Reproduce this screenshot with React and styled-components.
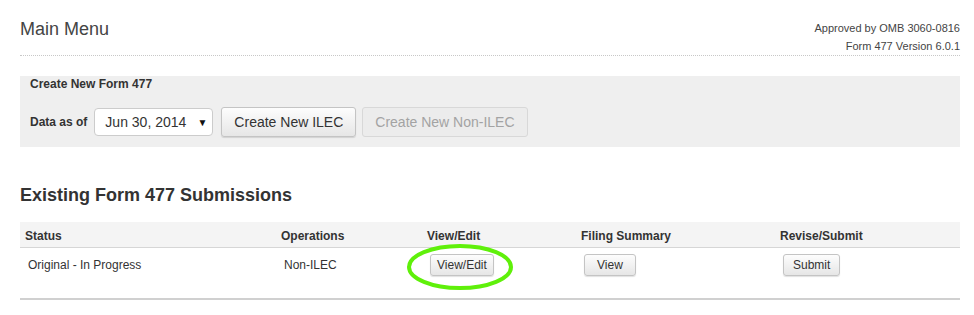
import React from "react";
import styled, { createGlobalStyle } from "styled-components";

const Global = createGlobalStyle`
  html, body { margin: 0; padding: 0; background: #fff; }
  body { font-family: "Liberation Sans", Arial, sans-serif; color: #333; }
`;

const Page = styled.div`
  width: 940px;
  padding-left: 20px;
`;

const Header = styled.header`
  box-sizing: border-box;
  height: 56px;
  padding-top: 17px;
  display: flex;
  justify-content: space-between;
  align-items: flex-start;
  border-bottom: 1px dotted #c8c8c8;
`;

const Title = styled.h1`
  margin: 0;
  font-size: 18px;
  line-height: 24px;
  font-weight: normal;
  color: #444;
`;

const Meta = styled.div`
  margin-top: 2px;
  font-size: 11px;
  line-height: 18px;
  text-align: right;
  color: #444;
`;

const Panel = styled.section`
  margin-top: 20px;
  height: 71px;
  box-sizing: border-box;
  padding: 1px 10px 0;
  background: #efefef;
`;

const PanelTitle = styled.div`
  font-size: 12px;
  line-height: 14px;
  font-weight: bold;
`;

const FormRow = styled.div`
  margin-top: 16px;
  display: flex;
  align-items: center;
`;

const Label = styled.span`
  font-size: 12px;
  font-weight: bold;
  margin-right: 7px;
`;

const Select = styled.div`
  box-sizing: border-box;
  width: 119px;
  height: 28px;
  padding: 0 5px 0 10px;
  display: flex;
  align-items: center;
  justify-content: space-between;
  background: #fff;
  border: 1px solid #ccc;
  border-radius: 4px;
  font-size: 14px;
  color: #333;
  margin-right: 8px;
`;

const Arrow = styled.span`
  font-size: 10px;
  color: #111;
`;

const Button = styled.button`
  box-sizing: border-box;
  font-family: inherit;
  height: ${p => (p.$small ? "22px" : "30px")};
  padding: ${p => p.$pad || (p.$small ? "0 7px" : "0 12px")};
  font-size: ${p => (p.$small ? "12px" : "14px")};
  color: ${p => (p.disabled ? "#a3a3a3" : "#333")};
  background: ${p =>
    p.disabled ? "#ececec" : "linear-gradient(#fdfdfd, #e6e6e6)"};
  border: 1px solid ${p => (p.disabled ? "#d8d8d8" : "#c4c4c4")};
  border-radius: 3px;
  box-shadow: ${p => (p.disabled ? "none" : "0 1px 1px rgba(0,0,0,0.12)")};
  margin-right: ${p => p.$gap || "0"};
  cursor: pointer;
`;

const Heading = styled.h2`
  margin: 37px 0 0;
  font-size: 18px;
  line-height: 22px;
  font-weight: bold;
  color: #333;
`;

const Table = styled.div`
  margin-top: 16px;
  position: relative;
  border-bottom: 2px solid #d0d0d0;
`;

const Row = styled.div`
  display: grid;
  grid-template-columns: 256px 146px 154px 199px 1fr;
  align-items: center;
  height: ${p => (p.$head ? "25px" : "50px")};
  background: ${p => (p.$head ? "#f4f4f4" : "#fff")};
  border-bottom: ${p => (p.$head ? "1px solid #d6d6d6" : "none")};
  font-size: 12px;
  font-weight: ${p => (p.$head ? "bold" : "normal")};
`;

const Cell = styled.div`
  padding-left: ${p => (p.$head ? "5px" : "8px")};
  padding-top: ${p => (p.$head ? "2px" : "0")};
  padding-bottom: ${p => (p.$head ? "0" : "16px")};
`;

const Highlight = styled.svg`
  position: absolute;
  left: 386px;
  top: 21px;
  overflow: visible;
  pointer-events: none;
`;

export default function App() {
  return (
    <>
      <Global />
      <Page>
        <Header>
          <Title>Main Menu</Title>
          <Meta>
            <div>Approved by OMB 3060-0816</div>
            <div>Form 477 Version 6.0.1</div>
          </Meta>
        </Header>
        <Panel>
          <PanelTitle>Create New Form 477</PanelTitle>
          <FormRow>
            <Label>Data as of</Label>
            <Select>
              <span>Jun 30, 2014</span>
              <Arrow>▼</Arrow>
            </Select>
            <Button $gap="6px">Create New ILEC</Button>
            <Button disabled>Create New Non-ILEC</Button>
          </FormRow>
        </Panel>
        <Heading>Existing Form 477 Submissions</Heading>
        <Table>
          <Row $head>
            <Cell $head>Status</Cell>
            <Cell $head>Operations</Cell>
            <Cell $head>View/Edit</Cell>
            <Cell $head>Filing Summary</Cell>
            <Cell $head>Revise/Submit</Cell>
          </Row>
          <Row>
            <Cell>Original - In Progress</Cell>
            <Cell>Non-ILEC</Cell>
            <Cell><Button $small $pad="0 6px">View/Edit</Button></Cell>
            <Cell><Button $small $pad="0 12px">View</Button></Cell>
            <Cell><Button $small $pad="0 9px">Submit</Button></Cell>
          </Row>
          <Highlight width="108" height="48" viewBox="0 0 108 48">
            <ellipse cx="54" cy="24" rx="51" ry="21" fill="none" stroke="#5ff00a" strokeWidth="4" />
          </Highlight>
        </Table>
      </Page>
    </>
  );
}
